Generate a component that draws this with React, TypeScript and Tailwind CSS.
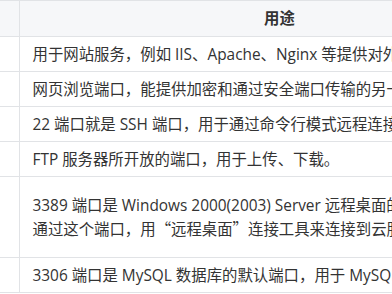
export default function App() {
  const rows = [
    "用于网站服务，例如 IIS、Apache、Nginx 等提供对外访问。",
    "网页浏览端口，能提供加密和通过安全端口传输的另一种 HTTP。",
    "22 端口就是 SSH 端口，用于通过命令行模式远程连接 Linux 系统服务器。",
    "FTP 服务器所开放的端口，用于上传、下载。",
  ];
  const font = {
    fontFamily: '"Open Sans", "Noto Sans CJK SC", sans-serif',
  };
  const cjk = { fontFamily: '"Noto Sans CJK SC", sans-serif' };
  return (
    <div className="w-[392px] h-[294px] overflow-hidden bg-white" style={font}>
      <table className="table-fixed w-[540px] border-collapse text-[15.4px] leading-[23px] text-[#333]">
        <colgroup>
          <col className="w-[19px]" />
          <col className="w-[521px]" />
        </colgroup>
        <thead>
          <tr className="h-[36px] bg-[#f6f7f9]">
            <th className="border-y border-r border-[#e1e3e6]"></th>
            <th className="border-y border-r border-[#e1e3e6] font-bold text-center">用途</th>
          </tr>
        </thead>
        <tbody>
          {rows.map((r) => (
            <tr key={r} className="h-[35px]">
              <td className="border-y border-r border-[#e1e3e6]"></td>
              <td className="border-y border-r border-[#e1e3e6] px-[13px] whitespace-nowrap overflow-hidden">{r}</td>
            </tr>
          ))}
          <tr className="h-[81px]">
            <td className="border-y border-r border-[#e1e3e6]"></td>
            <td className="border-y border-r border-[#e1e3e6] px-[13px] whitespace-nowrap overflow-hidden">
              3389 端口是 Windows 2000(2003) Server 远程桌面的服务端口，可以
              <br />
              通过这个端口，用<span style={cjk}>“远程桌面”</span>连接工具来连接到云服务器。
            </td>
          </tr>
          <tr className="h-[35px]">
            <td className="border-y border-r border-[#e1e3e6]"></td>
            <td className="border-y border-r border-[#e1e3e6] px-[13px] whitespace-nowrap overflow-hidden">
              3306 端口是 MySQL 数据库的默认端口，用于 MySQL 对外提供服务。
            </td>
          </tr>
        </tbody>
      </table>
    </div>
  );
}
